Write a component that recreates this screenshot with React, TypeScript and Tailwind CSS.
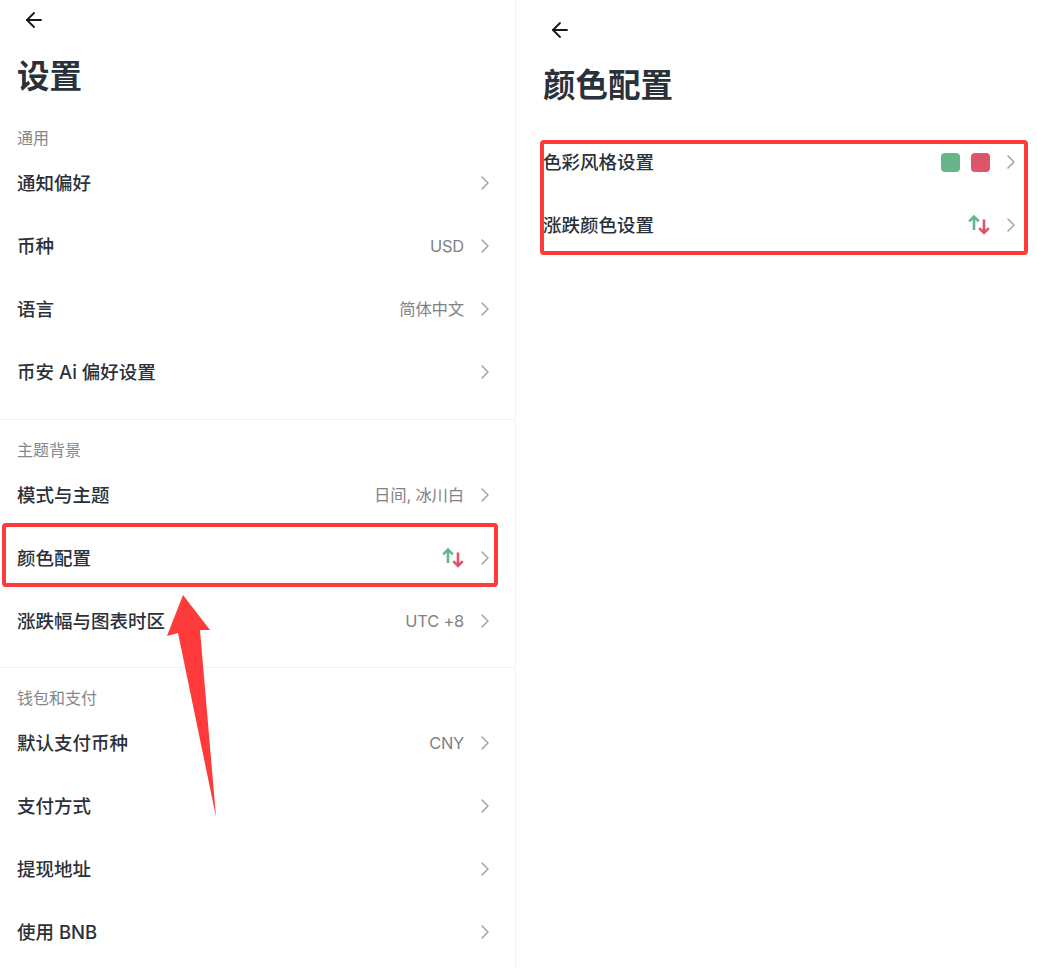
import { ArrowLeft, ChevronRight } from "lucide-react";
import type { ReactNode } from "react";

const font = "font-['Inter','Noto_Sans_CJK_SC',sans-serif]";

function UpDown() {
  return (
    <svg width="22" height="22" viewBox="0 0 22 22" fill="none" strokeWidth="2.6" strokeLinecap="butt">
      <path d="M6 16V2.6M1.2 7.4L6 2.6L10.8 7.4" stroke="#64b78c" />
      <path d="M16 5.5V18.9M11.2 14.1L16 18.9L20.8 14.1" stroke="#d9566a" />
    </svg>
  );
}

function Row({ label, value, right }: { label: string; value?: string; right?: ReactNode }) {
  return (
    <div className="flex h-[63px] items-center justify-between">
      <span className="text-[18.5px] font-medium text-[#2b3139]">{label}</span>
      <div className="mb-[1px] flex items-center">
        {value && <span className="text-[16.4px] tracking-[-0.2px] text-[#808285]">{value}</span>}
        {right}
        <ChevronRight className="ml-[9px] h-[24px] w-[24px] text-[#a3a7ad]" strokeWidth={1.6} />
      </div>
    </div>
  );
}

function SectionTitle({ children }: { children: ReactNode }) {
  return <div className="flex h-[24px] items-center text-[16px] text-[#85878b]">{children}</div>;
}

export default function App() {
  return (
    <div className={`relative flex h-[968px] w-[1037px] overflow-hidden bg-white ${font}`}>
      {/* left page */}
      <div className="w-[516px] shrink-0 border-r border-[#f3f3f4]">
        <div className="pl-[22px] pt-[8px]">
          <ArrowLeft className="h-[24px] w-[24px] text-[#14171c]" strokeWidth={1.8} />
        </div>
        <h1 className="mt-[21px] h-[48px] pl-[17px] text-[32.5px] font-bold leading-[48px] text-[#2b3139]">设置</h1>
        <div className="pl-[17px] pr-[18px] pt-[25px]">
          <SectionTitle>通用</SectionTitle>
          <div className="mt-[2px]">
            <Row label="通知偏好" />
            <Row label="币种" value="USD" />
            <Row label="语言" value="简体中文" />
            <Row label="币安 Ai 偏好设置" />
          </div>
        </div>
        <div className="mt-[15px] h-px bg-[#f3f3f4]" />
        <div className="pl-[17px] pr-[18px] pt-[18px]">
          <SectionTitle>主题背景</SectionTitle>
          <div className="mt-[2px]">
            <Row label="模式与主题" value="日间, 冰川白" />
            <Row label="颜色配置" right={<UpDown />} />
            <Row label="涨跌幅与图表时区" value="UTC +8" />
          </div>
        </div>
        <div className="mt-[14px] h-px bg-[#f3f3f4]" />
        <div className="pl-[17px] pr-[18px] pt-[18px]">
          <SectionTitle>钱包和支付</SectionTitle>
          <div className="mt-[2px]">
            <Row label="默认支付币种" value="CNY" />
            <Row label="支付方式" />
            <Row label="提现地址" />
            <Row label="使用 BNB" />
          </div>
        </div>
      </div>

      {/* right page */}
      <div className="flex-1">
        <div className="pl-[32px] pt-[18px]">
          <ArrowLeft className="h-[24px] w-[24px] text-[#14171c]" strokeWidth={1.8} />
        </div>
        <h1 className="mt-[20px] h-[48px] pl-[27px] text-[32.5px] font-bold leading-[48px] text-[#2b3139]">颜色配置</h1>
        <div className="pl-[27px] pr-[14px] pt-[21px]">
          <Row
            label="色彩风格设置"
            right={
              <div className="flex gap-[11px]">
                <div className="h-[19px] w-[19px] rounded-[4px] bg-[#68b58a]" />
                <div className="h-[19px] w-[19px] rounded-[4px] bg-[#dc5568]" />
              </div>
            }
          />
          <Row label="涨跌颜色设置" right={<UpDown />} />
        </div>
      </div>

      {/* annotations */}
      <div className="absolute left-[2px] top-[523px] h-[64px] w-[496px] rounded-[4px] border-[4px] border-[#fe3a3a]" />
      <div className="absolute left-[540px] top-[140px] h-[115px] w-[488px] rounded-[4px] border-[4px] border-[#fe3a3a]" />
      <svg className="absolute left-[160px] top-[590px]" width="60" height="232" viewBox="160 590 60 232">
        <path d="M183 595L210 630L200 630L216 817L178 633L167 636Z" fill="#fe3a3a" />
      </svg>
    </div>
  );
}
